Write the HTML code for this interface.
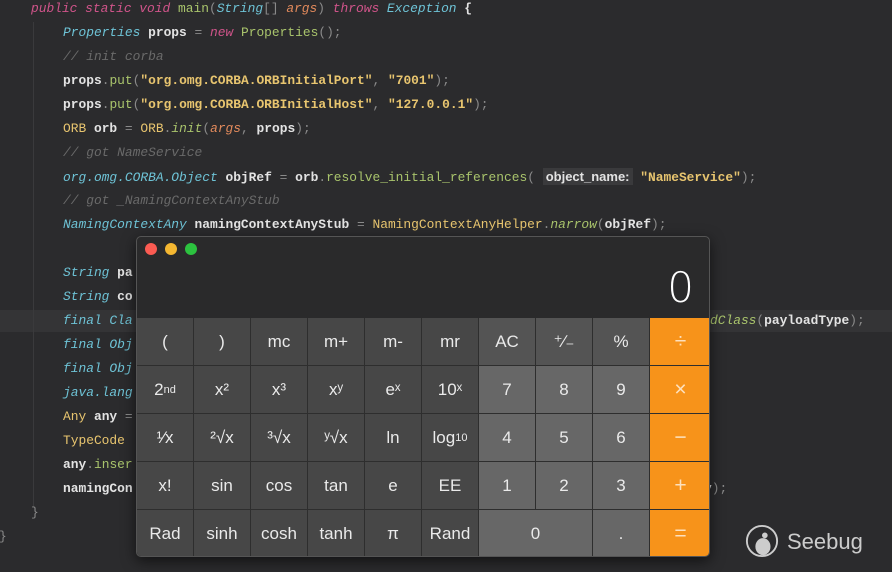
<!DOCTYPE html>
<html><head><meta charset="utf-8"><style>
*{margin:0;padding:0;box-sizing:border-box}
body{width:892px;height:572px;background:#2b2b2d;overflow:hidden;position:relative;font-family:"Liberation Mono",monospace}
.l{position:absolute;font-size:12.9px;line-height:24px;height:24px;color:#e3e3e3;white-space:pre;font-weight:bold}
.k{color:#d0548a;font-style:italic;font-weight:normal}
.t{color:#6ec3d6;font-style:italic;font-weight:normal}
.m{color:#a9c46c;font-weight:normal}
.s{color:#e8c56f}
.c{color:#6a6a6a;font-style:italic;font-weight:normal}
.y{color:#e8c56f;font-weight:normal}
.p{color:#8a8a8a;font-weight:normal}
.o{color:#e28a5c;font-style:italic;font-weight:normal}
.hl{position:absolute;left:0;top:310px;width:892px;height:22px;background:#343436}
.g{position:absolute;width:1px;background:#3a3a3c}
.calc{position:absolute;left:136px;top:236px;width:574px;height:321px;background:#2a2a2b;border:1px solid #555;border-radius:5px;overflow:hidden;box-shadow:0 4px 14px rgba(0,0,0,.6);font-family:"Liberation Sans",sans-serif}
.dot{position:absolute;top:6px;width:12px;height:12px;border-radius:50%}
.disp{position:absolute;right:15px;top:26px;font-size:42px;line-height:50px;color:#fff;font-family:"DejaVu Sans",sans-serif;font-weight:200}
.grid{position:absolute;left:0;top:81px;width:574px;height:239px;display:grid;grid-template-columns:repeat(9,56px) 61px;grid-template-rows:47px 47px 47px 47px 47px;gap:1px;background:#2e2e2e}
.b{display:flex;align-items:center;justify-content:center;color:#eaeaea;font-size:17px;background:#474747}
.n{background:#676767}
.d{background:#545454}
.or{background:#f7931a;color:#fde0bd;font-size:21px}
</style></head><body>
<div class="hl"></div>
<div class="g" style="left:33px;top:22px;height:485px"></div>
<div class="l" style="left:31px;top:-3px"><span class="k">public static void </span><span class="m">main</span><span class="p">(</span><span class="t">String</span><span class="p">[] </span><span class="o">args</span><span class="p">) </span><span class="k">throws </span><span class="t">Exception </span>{</div>
<div class="l" style="left:63px;top:21px"><span class="t">Properties</span> props <span class="p">=</span> <span class="k">new </span><span class="m">Properties</span><span class="p">();</span></div>
<div class="l" style="left:63px;top:45px"><span class="c">// init corba</span></div>
<div class="l" style="left:63px;top:69px">props<span class="p">.</span><span class="m">put</span><span class="p">(</span><span class="s">"org.omg.CORBA.ORBInitialPort"</span><span class="p">, </span><span class="s">"7001"</span><span class="p">);</span></div>
<div class="l" style="left:63px;top:93px">props<span class="p">.</span><span class="m">put</span><span class="p">(</span><span class="s">"org.omg.CORBA.ORBInitialHost"</span><span class="p">, </span><span class="s">"127.0.0.1"</span><span class="p">);</span></div>
<div class="l" style="left:63px;top:117px"><span class="y">ORB</span> orb <span class="p">=</span> <span class="y">ORB</span><span class="p">.</span><span class="m" style="font-style:italic">init</span><span class="p">(</span><span class="o">args</span><span class="p">, </span>props<span class="p">);</span></div>
<div class="l" style="left:63px;top:141px"><span class="c">// got NameService</span></div>
<div class="l" style="left:63px;top:165px"><span class="t">org.omg.CORBA.Object</span> objRef <span class="p">=</span> orb<span class="p">.</span><span class="m">resolve_initial_references</span><span class="p">(</span> <span style="background:#3a3a3c;font-family:'Liberation Sans',sans-serif;font-size:13px;padding:1px 3px">object_name:</span> <span class="s">"NameService"</span><span class="p">);</span></div>
<div class="l" style="left:63px;top:189px"><span class="c">// got _NamingContextAnyStub</span></div>
<div class="l" style="left:63px;top:213px"><span class="t">NamingContextAny</span> namingContextAnyStub <span class="p">=</span> <span class="y">NamingContextAnyHelper</span><span class="p">.</span><span class="m" style="font-style:italic">narrow</span><span class="p">(</span>objRef<span class="p">);</span></div>
<div class="l" style="left:63px;top:261px"><span class="t">String</span> pa</div>
<div class="l" style="left:63px;top:285px"><span class="t">String</span> co</div>
<div class="l" style="left:63px;top:309px"><span class="t">final Cla</span></div>
<div class="l" style="left:710px;top:309px"><span class="m" style="font-style:italic">dClass</span><span class="p">(</span>payloadType<span class="p">);</span></div>
<div class="l" style="left:63px;top:333px"><span class="t">final Obj</span></div>
<div class="l" style="left:63px;top:357px"><span class="t">final Obj</span></div>
<div class="l" style="left:63px;top:381px"><span class="t">java.lang</span></div>
<div class="l" style="left:63px;top:405px"><span class="y">Any</span> any <span class="p">=</span></div>
<div class="l" style="left:63px;top:429px"><span class="y">TypeCode</span></div>
<div class="l" style="left:63px;top:453px">any<span class="p">.</span><span class="m">inser</span></div>
<div class="l" style="left:63px;top:477px">namingCon</div>
<div class="l" style="left:704px;top:477px">y<span class="p">);</span></div>
<div class="l" style="left:31px;top:501px"><span class="p">}</span></div>
<div class="l" style="left:-1px;top:525px"><span class="p">}</span></div>

<div class="calc">
<div class="dot" style="left:8px;background:#fb5b52"></div>
<div class="dot" style="left:28px;background:#f4b731"></div>
<div class="dot" style="left:48px;background:#2cc23f"></div>
<div class="disp">0</div>
<div class="grid">
<div class="b">(</div><div class="b">)</div><div class="b">mc</div><div class="b">m+</div><div class="b">m-</div><div class="b">mr</div><div class="b d">AC</div><div class="b d">⁺∕₋</div><div class="b d">%</div><div class="b or">÷</div>
<div class="b">2<sup style="font-size:11px">nd</sup></div><div class="b">x²</div><div class="b">x³</div><div class="b">xʸ</div><div class="b">eˣ</div><div class="b">10ˣ</div><div class="b n">7</div><div class="b n">8</div><div class="b n">9</div><div class="b or">×</div>
<div class="b">¹⁄x</div><div class="b">²√x</div><div class="b">³√x</div><div class="b">ʸ√x</div><div class="b">ln</div><div class="b">log<sub style="font-size:11px">10</sub></div><div class="b n">4</div><div class="b n">5</div><div class="b n">6</div><div class="b or">−</div>
<div class="b">x!</div><div class="b">sin</div><div class="b">cos</div><div class="b">tan</div><div class="b">e</div><div class="b">EE</div><div class="b n">1</div><div class="b n">2</div><div class="b n">3</div><div class="b or">+</div>
<div class="b">Rad</div><div class="b">sinh</div><div class="b">cosh</div><div class="b">tanh</div><div class="b">π</div><div class="b">Rand</div><div class="b n" style="grid-column:span 2">0</div><div class="b n">.</div><div class="b or">=</div>
</div>
</div>

<svg style="position:absolute;left:745px;top:524px" width="34" height="34" viewBox="0 0 36 36"><circle cx="18" cy="18" r="16" fill="none" stroke="#ccc" stroke-width="2"/><ellipse cx="19" cy="24" rx="8" ry="9" fill="#ccc"/><circle cx="21" cy="12" r="3" fill="#ccc"/></svg>
<div style="position:absolute;left:787px;top:529px;font-family:'Liberation Sans',sans-serif;font-size:22px;color:#ccc">Seebug</div>
</body></html>
